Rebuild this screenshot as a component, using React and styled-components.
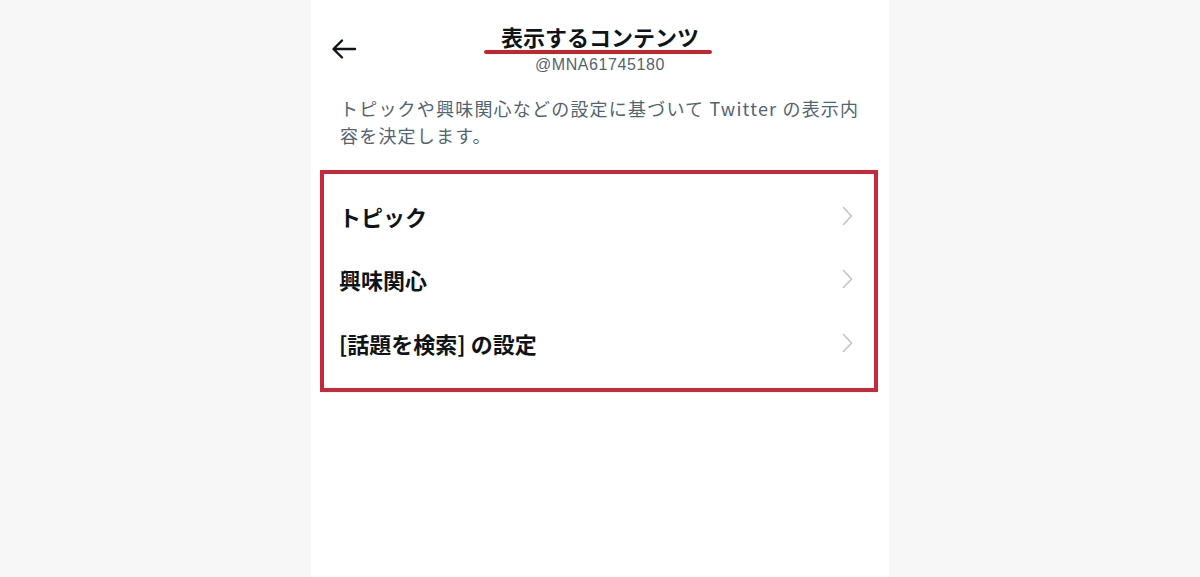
import React from "react";
import styled, { createGlobalStyle } from "styled-components";

const GlobalStyle = createGlobalStyle`
  html, body {
    margin: 0;
    padding: 0;
    background: #f7f7f7;
  }
  body {
    font-family: "Noto Sans CJK JP", "Noto Sans", "Liberation Sans", sans-serif;
  }
`;

const items = ["トピック", "興味関心", "[話題を検索] の設定"];

const App = () => {
  return (
    <>
      <GlobalStyle />
      <Page>
        <Panel>
          <Header>
            <BackButton aria-label="戻る">
              <svg width="26" height="22" viewBox="0 0 26 22" fill="none">
                <path
                  d="M24 11H3M11 2.5L2.5 11L11 19.5"
                  stroke="#0f1419"
                  strokeWidth="2.4"
                  strokeLinecap="round"
                  strokeLinejoin="round"
                />
              </svg>
            </BackButton>
            <TitleBlock>
              <Title>表示するコンテンツ</Title>
              <Handle>@MNA61745180</Handle>
            </TitleBlock>
          </Header>

          <Description>
            トピックや興味関心などの設定に基づいて Twitter の表示内容を決定します。
          </Description>

          <HighlightBox>
            {items.map((label) => (
              <Row key={label}>
                <RowLabel>{label}</RowLabel>
                <Chevron width="11" height="20" viewBox="0 0 11 20" fill="none">
                  <path
                    d="M1.5 1.5L9.5 10L1.5 18.5"
                    stroke="#bcc5cc"
                    strokeWidth="1.6"
                    strokeLinecap="round"
                    strokeLinejoin="round"
                  />
                </Chevron>
              </Row>
            ))}
          </HighlightBox>
        </Panel>
      </Page>
    </>
  );
};

const Page = styled.div`
  width: 100%;
  height: 577px;
  display: flex;
  justify-content: center;
  overflow: hidden;
`;

const Panel = styled.div`
  width: 578px;
  height: 100%;
  background: #ffffff;
  display: flex;
  flex-direction: column;
`;

const Header = styled.div`
  position: relative;
  display: flex;
  justify-content: center;
  padding-top: 22px;
`;

const BackButton = styled.div`
  position: absolute;
  left: 20px;
  top: 38px;
  display: flex;
`;

const TitleBlock = styled.div`
  display: flex;
  flex-direction: column;
  align-items: center;
`;

const Title = styled.h1`
  position: relative;
  margin: 0;
  font-size: 22px;
  line-height: 28px;
  font-weight: 700;
  color: #0f1419;

  &::after {
    content: "";
    position: absolute;
    left: -17px;
    right: -13px;
    top: 28px;
    height: 4px;
    border-radius: 2px;
    background: #c1272d;
  }
`;

const Handle = styled.div`
  margin-top: 5px;
  font-family: "Liberation Sans", "Noto Sans", sans-serif;
  font-size: 16px;
  line-height: 20px;
  letter-spacing: 0.6px;
  color: #536471;
`;

const Description = styled.p`
  margin: 20px 0 0;
  padding: 0 16px 0 29px;
  font-size: 18px;
  line-height: 27px;
  color: #536471;
  letter-spacing: 1.2px;
`;

const HighlightBox = styled.div`
  margin: 21px 11px 0 9px;
  border: 4px solid #c8283a;
  padding: 10px 0 13px;
  display: flex;
  flex-direction: column;
`;

const Row = styled.div`
  height: 63.5px;
  display: flex;
  align-items: center;
  justify-content: space-between;
  padding: 0 21px 0 15px;
`;

const RowLabel = styled.span`
  font-size: 22px;
  font-weight: 700;
  color: #0f1419;
`;

const Chevron = styled.svg`
  flex-shrink: 0;
`;

export default App;
